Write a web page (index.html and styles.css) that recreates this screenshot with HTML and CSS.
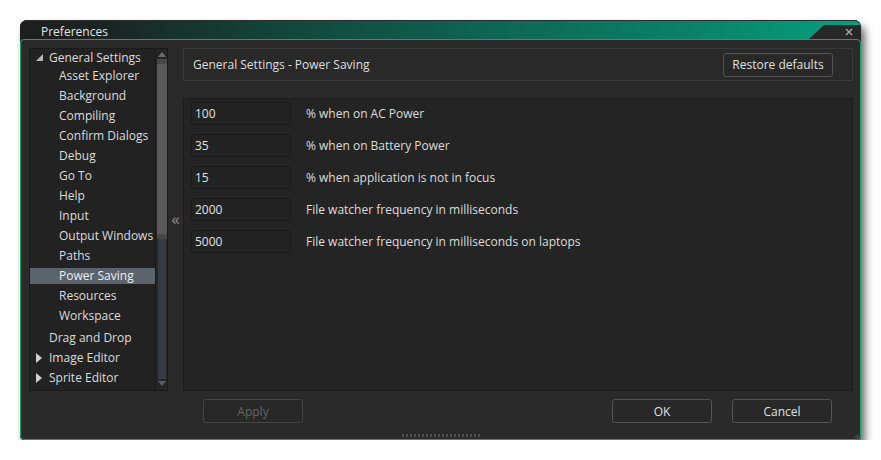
FILE: index.html
```html
<!DOCTYPE html>
<html>
<head>
<meta charset="utf-8">
<title>Preferences</title>
<link rel="stylesheet" href="styles.css">
</head>
<body>
<div class="window">
  <div class="titlebar">
    <span class="title">Preferences</span>
    <div class="close-tab">
      <svg width="8" height="8" viewBox="0 0 8 8"><path d="M1 1 L7 7 M7 1 L1 7" stroke="#a9a9a9" stroke-width="1.4" fill="none"/></svg>
    </div>
  </div>
  <div class="frame">
    <div class="content-row">
      <div class="tree">
        <div class="tree-list">
          <div class="node group"><span class="tri-open"></span>General Settings</div>
          <div class="node child">Asset Explorer</div>
          <div class="node child">Background</div>
          <div class="node child">Compiling</div>
          <div class="node child">Confirm Dialogs</div>
          <div class="node child">Debug</div>
          <div class="node child">Go To</div>
          <div class="node child">Help</div>
          <div class="node child">Input</div>
          <div class="node child">Output Windows</div>
          <div class="node child">Paths</div>
          <div class="node child selected">Power Saving</div>
          <div class="node child">Resources</div>
          <div class="node child">Workspace</div>
          <div class="node group after">Drag and Drop</div>
          <div class="node group"><span class="tri-closed"></span>Image Editor</div>
          <div class="node group"><span class="tri-closed"></span>Sprite Editor</div>
        </div>
        <div class="scrollbar">
          <div class="arrow-up"></div>
          <div class="thumb"><div class="thumb-cap"></div><div class="thumb-body"></div><div class="thumb-cap"></div></div>
          <div class="track"></div>
          <div class="arrow-down"></div>
        </div>
      </div>
      <div class="splitter">&laquo;</div>
      <div class="right">
        <div class="header">
          <span class="header-title">General Settings - Power Saving</span>
          <button class="btn">Restore defaults</button>
        </div>
        <div class="panel">
          <div class="field"><div class="input">100</div><span class="label">% when on AC Power</span></div>
          <div class="field"><div class="input">35</div><span class="label">% when on Battery Power</span></div>
          <div class="field"><div class="input">15</div><span class="label">% when application is not in focus</span></div>
          <div class="field"><div class="input">2000</div><span class="label">File watcher frequency in milliseconds</span></div>
          <div class="field"><div class="input">5000</div><span class="label">File watcher frequency in milliseconds on laptops</span></div>
        </div>
      </div>
    </div>
    <div class="button-row">
      <button class="btn wide disabled">Apply</button>
      <div class="spacer"></div>
      <button class="btn wide">OK</button>
      <button class="btn wide">Cancel</button>
    </div>
    <div class="grip"></div>
    <div class="corner-grip"></div>
  </div>
</div>
</body>
</html>
```
FILE: styles.css
```css
* { box-sizing: border-box; }
html, body { margin: 0; background: #ffffff; }
body {
  padding: 20px 0 0 20px;
  font-family: "Open Sans", "Noto Sans", "DejaVu Sans", sans-serif;
  font-size: 12px;
  color: #dadada;
}
.window {
  width: 841px;
  border-radius: 7px 7px 4px 4px;
  box-shadow: 4px 6px 8px rgba(0,0,0,0.6);
  background: #2a2a2a;
}
.titlebar {
  height: 19px;
  border-top: 1px solid #2c2c2c;
  border-radius: 7px 7px 0 0;
  background: linear-gradient(90deg, #1d1d1d 0%, #1a2523 10%, #134439 30%, #0e6452 55%, #0a8268 80%, #05a07f 100%);
  display: flex;
  align-items: stretch;
  overflow: hidden;
}
.title {
  padding-left: 21px;
  line-height: 19px;
  margin-top: 1px;
  color: #e2e2e2;
  flex: 1;
}
.close-tab {
  align-self: flex-end;
  width: 52px;
  height: 14px;
  background: #272727;
  clip-path: polygon(15px 0, 100% 0, 100% 100%, 0 100%);
  display: flex;
  align-items: center;
  justify-content: flex-end;
  padding-right: 8px;
}
.close-tab svg { display: block; }
.frame {
  position: relative;
  height: 401px;
  border: 1px solid #1d9f6c;
  border-radius: 4px;
  background: #2a2a2a;
  padding: 8px 7px 0 8px;
  display: flex;
  flex-direction: column;
}
.content-row {
  display: flex;
  height: 343px;
}
.tree {
  width: 139px;
  border: 1px solid #1a1a1a;
  background: #222222;
  display: flex;
}
.tree-list {
  flex: 1;
  display: flex;
  flex-direction: column;
  gap: 4px;
  padding-top: 1px;
}
.node {
  height: 16px;
  line-height: 16px;
  white-space: nowrap;
  color: #dcdcdc;
  position: relative;
}
.node.group { padding-left: 19px; }
.node.group:first-child { margin-bottom: -2px; }
.node.child { padding-left: 29px; }
.node.after { margin-top: 2px; }
.node.selected { background: #5b636d; color: #eef0f2; }
.tri-open {
  position: absolute;
  left: 6px;
  top: 4px;
  width: 0; height: 0;
  border-left: 7px solid transparent;
  border-bottom: 7px solid #b8b8b8;
}
.tri-closed {
  position: absolute;
  left: 6px;
  top: 3px;
  width: 0; height: 0;
  border-top: 5px solid transparent;
  border-bottom: 5px solid transparent;
  border-left: 6px solid #cfcfcf;
}
.scrollbar {
  width: 12px;
  border-left: 1px solid #1a1a1a;
  background: #262626;
  display: flex;
  flex-direction: column;
  align-items: center;
}
.arrow-up {
  margin-top: 3px;
  width: 0; height: 0;
  border-left: 4px solid transparent;
  border-right: 4px solid transparent;
  border-bottom: 5px solid #6a6a6a;
}
.arrow-down {
  margin: 2px 0 4px;
  width: 0; height: 0;
  border-left: 4px solid transparent;
  border-right: 4px solid transparent;
  border-top: 5px solid #5e5e5e;
}
.thumb {
  margin-top: 2px;
  width: 10px;
  display: flex;
  flex-direction: column;
}
.thumb-cap { height: 5px; background: #474747; }
.thumb-body { height: 170px; background: #595959; }
.track {
  flex: 1;
  width: 8px;
  background: #353b41;
}
.splitter {
  width: 15px;
  align-self: center;
  text-align: center;
  color: #8c8c8c;
  font-size: 17px;
  line-height: 18px;
  margin-top: -2px;
}
.right {
  flex: 1;
  display: flex;
  flex-direction: column;
  gap: 17px;
}
.header {
  height: 33px;
  border: 1px solid #3a3a3a;
  background: #292929;
  display: flex;
  align-items: center;
  justify-content: space-between;
  padding: 0 19px 0 9px;
}
.header-title { color: #dedede; }
.btn {
  font-family: inherit;
  font-size: 12px;
  color: #e0e0e0;
  background: #282828;
  border: 1px solid #555555;
  border-radius: 3px;
  height: 24px;
  padding: 0 8px;
}
.header .btn { width: 110px; }
.panel {
  flex: 1;
  border: 1px solid #1c1c1c;
  background: #242424;
  padding: 3px 7px;
  display: flex;
  flex-direction: column;
  gap: 9px;
}
.field {
  display: flex;
  align-items: center;
  gap: 15px;
}
.input {
  width: 100px;
  height: 23px;
  line-height: 21px;
  border: 1px solid #1a1a1a;
  border-radius: 2px;
  background: #232323;
  padding-left: 3px;
  color: #e0e0e0;
}
.label { color: #dcdcdc; }
.button-row {
  margin-top: 8px;
  display: flex;
  gap: 20px;
  padding-left: 174px;
  padding-right: 21px;
}
.spacer { flex: 1; }
.btn.wide { width: 100px; }
.btn.disabled { color: #666666; border-color: #444444; }
.grip {
  margin: 11px auto 0;
  width: 78px;
  height: 3px;
  background-image: repeating-linear-gradient(90deg, #555 0 2px, transparent 2px 4px);
  opacity: 0.8;
}
.corner-grip {
  position: absolute;
  right: 1px;
  bottom: 1px;
  width: 6px;
  height: 6px;
  background: linear-gradient(135deg, transparent 50%, #4a4a4a 50%);
  opacity: 0.7;
}
```
